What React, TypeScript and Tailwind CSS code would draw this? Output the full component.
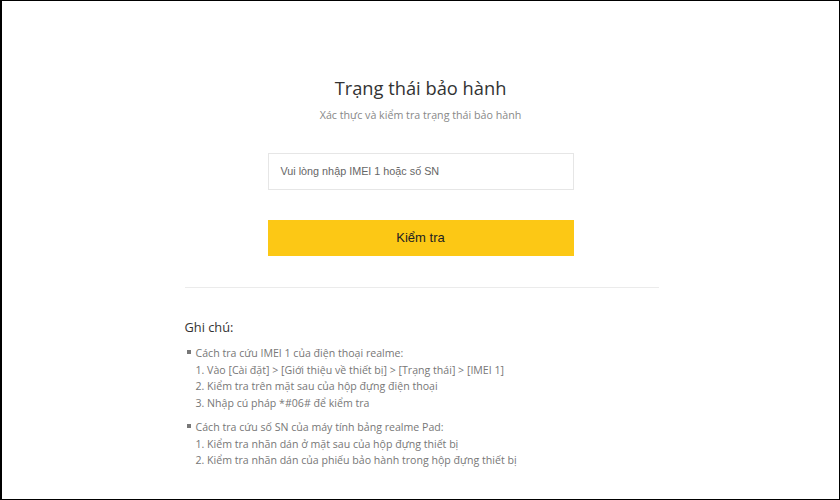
import React from "react";

export default function App() {
  const os = { fontFamily: '"Open Sans", "Noto Sans", sans-serif' };
  const ar = { fontFamily: '"Liberation Sans", Arial, sans-serif' };
  return (
    <div className="w-[840px] h-[500px] bg-white border border-black border-l-2 box-border overflow-hidden" style={os}>
      <div className="flex flex-col items-center pt-[73px]">
        <h1 className="text-[18.3px] leading-[28px] text-[#333]">Trạng thái bảo hành</h1>
        <p className="mt-[5px] text-[10.7px] leading-[16px] text-[#888]">Xác thực và kiểm tra trạng thái bảo hành</p>
        <div className="mt-[30px] w-[306px] h-[37px] border border-[#e6e6e6] flex items-center px-[12px] text-[10.8px] text-[#666]" style={ar}>
          Vui lòng nhập IMEI 1 hoặc số SN
        </div>
        <div className="mt-[30px] w-[306px] h-[36px] bg-[#fcc815] flex items-center justify-center text-[13px] text-[#222]" style={ar}>
          Kiểm tra
        </div>
        <div className="mt-[31px] w-[474px] h-px bg-[#ebebeb] ml-[2px]" />
        <div className="w-[474px] ml-[2px] pt-[29px]">
          <div className="text-[12.8px] leading-[20px] text-[#333]">Ghi chú:</div>
          <ul className="mt-[8px] text-[10.6px] leading-[16.7px] text-[#777]">
            <li className="flex">
              <span className="w-[4px] h-[4px] bg-[#777] mt-[5px] ml-[2px] mr-[5px] shrink-0" />
              <div>
                <div>Cách tra cứu IMEI 1 của điện thoại realme:</div>
                <div>1. Vào [Cài đặt] &gt; [Giới thiệu về thiết bị] &gt; [Trạng thái] &gt; [IMEI 1]</div>
                <div>2. Kiểm tra trên mặt sau của hộp đựng điện thoại</div>
                <div>3. Nhập cú pháp *#06# để kiểm tra</div>
              </div>
            </li>
            <li className="flex mt-[7px]">
              <span className="w-[4px] h-[4px] bg-[#777] mt-[5px] ml-[2px] mr-[5px] shrink-0" />
              <div>
                <div>Cách tra cứu số SN của máy tính bảng realme Pad:</div>
                <div>1. Kiểm tra nhãn dán ở mặt sau của hộp đựng thiết bị</div>
                <div>2. Kiểm tra nhãn dán của phiếu bảo hành trong hộp đựng thiết bị</div>
              </div>
            </li>
          </ul>
        </div>
      </div>
    </div>
  );
}
